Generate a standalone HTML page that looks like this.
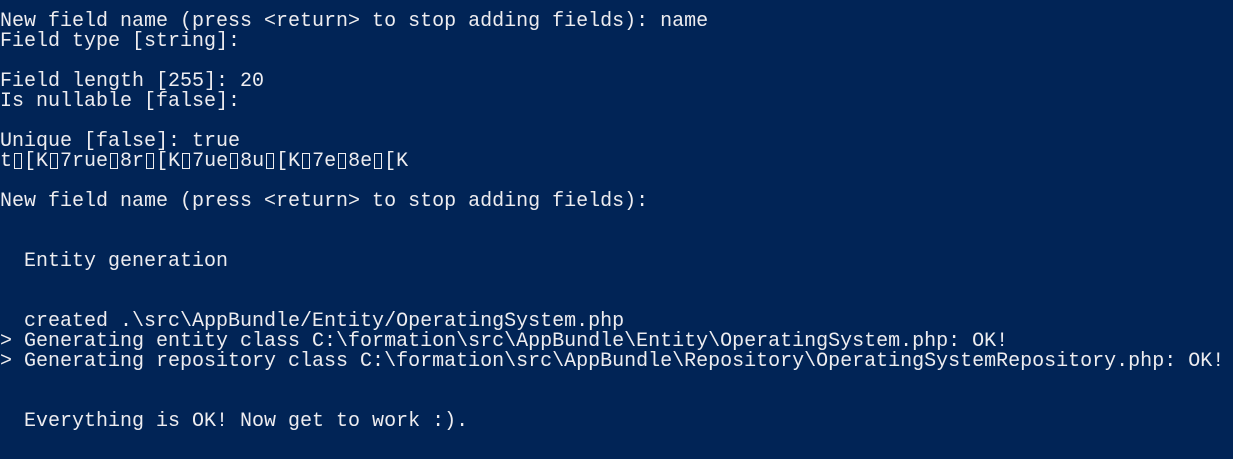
<!DOCTYPE html>
<html><head><meta charset="utf-8"><style>
html,body{margin:0;padding:0;background:#012456;width:1233px;height:459px;overflow:hidden}
pre{position:absolute;left:0;top:12px;margin:0;font-family:"Liberation Mono",monospace;font-size:20px;line-height:20px;color:#eeedf0;letter-spacing:0}
.b{display:inline-block;width:12px;height:16px;position:relative;vertical-align:-3px}
.b::after{content:"";position:absolute;left:2px;top:0;width:6px;height:14px;border:1px solid #eeedf0}
</style></head><body>
<pre>New field name (press &lt;return&gt; to stop adding fields): name
Field type [string]:

Field length [255]: 20
Is nullable [false]:

Unique [false]: true
t<span class="b"></span>[K<span class="b"></span>7rue<span class="b"></span>8r<span class="b"></span>[K<span class="b"></span>7ue<span class="b"></span>8u<span class="b"></span>[K<span class="b"></span>7e<span class="b"></span>8e<span class="b"></span>[K

New field name (press &lt;return&gt; to stop adding fields):


  Entity generation


  created .\src\AppBundle/Entity/OperatingSystem.php
&gt; Generating entity class C:\formation\src\AppBundle\Entity\OperatingSystem.php: OK!
&gt; Generating repository class C:\formation\src\AppBundle\Repository\OperatingSystemRepository.php: OK!


  Everything is OK! Now get to work :).
</pre>
</body></html>
